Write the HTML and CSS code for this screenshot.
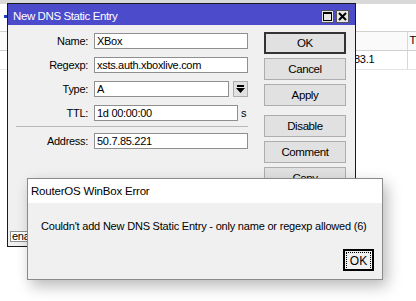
FILE: index.html
```html
<!DOCTYPE html>
<html lang="en">
<head>
  <meta charset="UTF-8">
  <title>New DNS Static Entry</title>
  <link rel="stylesheet" href="styles.css">
</head>
<body>
  <div class="desk">
    <div class="top-band"></div>
    <div class="toolbar"><span class="tool-mark"></span></div>
    <div class="grid">
      <div class="grid-row grid-head">
        <span class="cell cell-addr"></span>
        <span class="cell cell-t">T</span>
      </div>
      <div class="grid-row">
        <span class="cell cell-addr">83.1</span>
        <span class="cell cell-t"></span>
      </div>
    </div>
  </div>

  <div class="win">
    <div class="win-title">
      <span class="win-caption">New DNS Static Entry</span>
      <div class="win-controls">
        <span class="win-btn">
          <svg width="9" height="9" viewBox="0 0 9 9"><rect x="0.5" y="0.5" width="8" height="8" fill="none" stroke="#000"/><rect x="0" y="0" width="9" height="2" fill="#000"/></svg>
        </span>
        <span class="win-btn">
          <svg width="9" height="9" viewBox="0 0 9 9"><path d="M1 1 L8 8 M8 1 L1 8" stroke="#000" stroke-width="2"/></svg>
        </span>
      </div>
    </div>
    <div class="win-body">
      <div class="form">
        <div class="form-row">
          <label class="form-label">Name:</label>
          <div class="field">XBox</div>
        </div>
        <div class="form-row">
          <label class="form-label">Regexp:</label>
          <div class="field">xsts.auth.xboxlive.com</div>
        </div>
        <div class="form-row">
          <label class="form-label">Type:</label>
          <div class="field field-type">A</div>
          <span class="drop-btn">
            <svg width="9" height="8" viewBox="0 0 9 8"><rect x="1" y="0" width="7" height="2" fill="#000"/><path d="M0 3 H9 L4.5 8 Z" fill="#000"/></svg>
          </span>
        </div>
        <div class="form-row">
          <label class="form-label">TTL:</label>
          <div class="field field-ttl">1d 00:00:00</div>
          <span class="unit">s</span>
        </div>
        <div class="separator"></div>
        <div class="form-row">
          <label class="form-label">Address:</label>
          <div class="field">50.7.85.221</div>
        </div>
      </div>
      <div class="actions">
        <button class="btn btn-default">OK</button>
        <button class="btn">Cancel</button>
        <button class="btn">Apply</button>
        <button class="btn btn-gap">Disable</button>
        <button class="btn">Comment</button>
        <button class="btn">Copy</button>
      </div>
    </div>
    <div class="status-bar">
      <span class="status-cell">ena</span>
    </div>
  </div>

  <div class="dialog">
    <div class="dialog-title">RouterOS WinBox Error</div>
    <div class="dialog-body">
      <p class="dialog-msg">Couldn't add New DNS Static Entry - only name or regexp allowed (6)</p>
      <div class="dialog-foot">
        <button class="dialog-ok"><span class="focus-ring">OK</span></button>
      </div>
    </div>
  </div>
</body>
</html>
```

FILE: styles.css
```css
body {
  margin: 0;
  width: 416px;
  height: 301px;
  overflow: hidden;
  position: relative;
  background: #ffffff;
  font-family: "Liberation Sans", Arial, sans-serif;
  font-size: 11px;
  letter-spacing: -0.3px;
  color: #000;
}

/* background application */
.top-band {
  height: 4px;
  background: #d9d9d9;
}

.toolbar {
  height: 27px;
  position: relative;
}

.tool-mark {
  position: absolute;
  left: 4px;
  top: 11px;
  width: 3px;
  height: 3px;
  background: #1f3fbf;
}

.grid-row {
  display: flex;
  height: 18px;
  border-bottom: 1px solid #e4e4e4;
}

.grid-head {
  border-top: 1px solid #d0d0d0;
  border-bottom: 1px solid #d0d0d0;
  background: #fafafa;
}

.cell {
  line-height: 17px;
}

.cell-addr {
  width: 408px;
  box-sizing: border-box;
  padding-left: 354px;
  border-right: 1px solid #d8d8d8;
}

.cell-t {
  padding-left: 2px;
}

/* main window */
.win {
  position: absolute;
  left: 7px;
  top: 3px;
  width: 349px;
  height: 244px;
  box-sizing: border-box;
  border: 1px solid #1a1a1a;
  background: #f0f0f0;
  display: flex;
  flex-direction: column;
}

.win-title {
  height: 21px;
  box-sizing: border-box;
  padding: 3px 6px 0 5px;
  background: #4b4bcc;
  color: #fff;
  display: flex;
  align-items: center;
  justify-content: space-between;
  font-size: 11.5px;
  letter-spacing: -0.4px;
}

.win-controls {
  display: flex;
  gap: 2px;
  margin-top: 1px;
}

.win-btn {
  width: 13px;
  height: 13px;
  box-sizing: border-box;
  background: #e6e6e6;
  border: 1px solid #555;
  display: flex;
  align-items: center;
  justify-content: center;
}

.win-body {
  display: flex;
  gap: 16px;
}

.form {
  width: 240px;
  padding-top: 8px;
  display: flex;
  flex-direction: column;
  gap: 8px;
}

.form-row {
  display: flex;
  align-items: center;
  height: 16px;
}

.form-label {
  width: 80px;
  margin-right: 6px;
  text-align: right;
}

.field {
  width: 154px;
  height: 16px;
  box-sizing: border-box;
  border: 1px solid #8f8f8f;
  background: #fff;
  padding-left: 2px;
  line-height: 14px;
  white-space: nowrap;
  overflow: hidden;
}

.field-type {
  width: 135px;
}

.field-ttl {
  width: 144px;
}

.drop-btn {
  width: 15px;
  height: 16px;
  margin-left: 4px;
  box-sizing: border-box;
  border: 1px solid #adadad;
  background: #e1e1e1;
  display: flex;
  align-items: center;
  justify-content: center;
}

.unit {
  margin-left: 3px;
}

.separator {
  height: 1px;
  margin: -3px 0 -2px 8px;
  background: #b9b9b9;
}

.actions {
  padding-top: 7px;
  display: flex;
  flex-direction: column;
  gap: 4px;
}

.btn {
  width: 82px;
  height: 22px;
  border: 1px solid #adadad;
  background: #e1e1e1;
  font: inherit;
  font-size: 11.5px;
  letter-spacing: -0.4px;
  color: #000;
  padding: 0;
}

.btn-default {
  border: 2px solid #333;
}

.btn-gap {
  margin-top: 5px;
}

.status-bar {
  margin-top: auto;
  padding: 0 0 4px 2px;
}

.status-cell {
  display: block;
  width: 24px;
  height: 11px;
  box-sizing: border-box;
  border: 1px solid #8f8f8f;
  border-right: none;
  background: #fff;
  padding-left: 1px;
  font-size: 11px;
  line-height: 9px;
  white-space: nowrap;
}

/* error dialog */
.dialog {
  position: absolute;
  left: 27px;
  top: 178px;
  width: 356px;
  height: 102px;
  box-sizing: border-box;
  border: 1px solid #8a8a8a;
  background: #f0f0f0;
  box-shadow: 4px 6px 14px rgba(0, 0, 0, 0.28);
  display: flex;
  flex-direction: column;
  letter-spacing: -0.2px;
}

.dialog-title {
  height: 24px;
  background: #fff;
  padding-left: 3px;
  line-height: 24px;
  font-size: 11.5px;
}

.dialog-body {
  flex: 1;
  display: flex;
  flex-direction: column;
}

.dialog-msg {
  margin: 16px 0 0 13px;
  font-size: 11px;
  line-height: 14px;
  white-space: nowrap;
}

.dialog-foot {
  margin-top: auto;
  padding: 0 8px 8px 0;
  display: flex;
  justify-content: flex-end;
}

.dialog-ok {
  width: 31px;
  height: 22px;
  box-sizing: border-box;
  border: 2px solid #000;
  background: #f0f0f0;
  padding: 1px;
  font: inherit;
  font-size: 12px;
}

.focus-ring {
  display: flex;
  align-items: center;
  justify-content: center;
  height: 100%;
  border: 1px dotted #000;
}
```
